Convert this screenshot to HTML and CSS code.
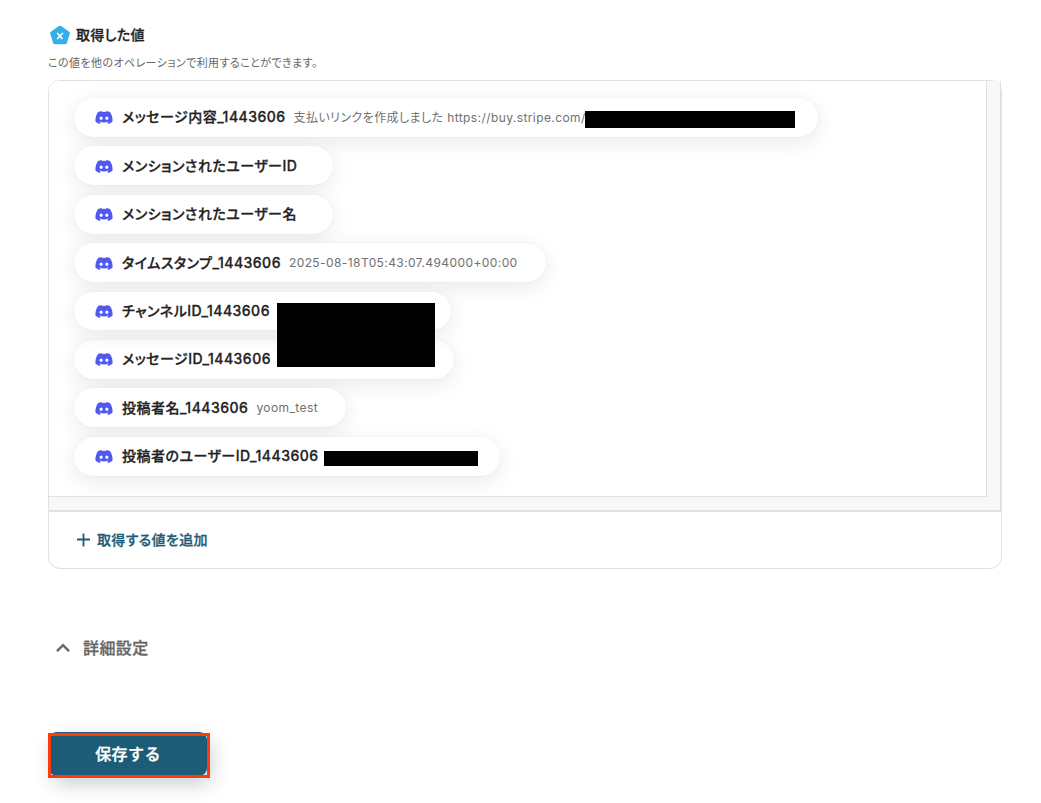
FILE: index.html
```html
<!DOCTYPE html>
<html lang="ja">

<head>
    <meta charset="UTF-8">
    <meta name="viewport" content="width=device-width, initial-scale=1.0">
    <title>取得した値</title>
    <link rel="stylesheet" href="styles.css">
</head>

<body>
    <svg width="0" height="0" class="sprite">
        <symbol id="discord" viewBox="0 0 127.14 96.36">
            <path fill="#5059ef" d="M107.7,8.07A105.15,105.15,0,0,0,81.47,0a72.06,72.06,0,0,0-3.36,6.83A97.68,97.68,0,0,0,49,6.83,72.37,72.37,0,0,0,45.64,0,105.89,105.89,0,0,0,19.39,8.09C2.79,32.65-1.71,56.6.54,80.21h0A105.73,105.73,0,0,0,32.71,96.36,77.7,77.7,0,0,0,39.6,85.25a68.42,68.42,0,0,1-10.85-5.18c.91-.66,1.8-1.34,2.66-2a75.57,75.57,0,0,0,64.32,0c.87.71,1.76,1.39,2.66,2a68.68,68.68,0,0,1-10.87,5.19,77,77,0,0,0,6.89,11.1A105.25,105.25,0,0,0,126.6,80.22h0C129.24,52.84,122.09,29.11,107.7,8.07ZM42.45,65.69C36.18,65.69,31,60,31,53s5-12.74,11.43-12.74S54,46,53.89,53,48.84,65.69,42.45,65.69Zm42.24,0C78.41,65.69,73.25,60,73.25,53s5-12.74,11.44-12.74S96.23,46,96.12,53,91.08,65.69,84.69,65.69Z"/>
        </symbol>
    </svg>

    <main>
        <h2>
            <svg class="badge" width="20" height="20" viewBox="0 0 20 20">
                <path d="M10 2.6 L18 8.4 L15 17.4 H5 L2 8.4 Z" fill="#36aee8" stroke="#36aee8" stroke-width="3.8" stroke-linejoin="round"/>
                <path d="M7.2 8 L12.4 14 M12.8 8 L7.2 14" stroke="#fff" stroke-width="1.6"/>
            </svg>
            <span>取得した値</span>
        </h2>
        <p class="desc">この値を他のオペレーションで利用することができます。</p>

        <section class="card">
            <div class="scroll">
                <ul class="values">
                    <li class="wide"><svg><use href="#discord"/></svg><b>メッセージ内容_1443606</b><span>支払いリンクを作成しました https://buy.stripe.com/</span><i class="mask mask-link"></i></li>
                    <li><svg><use href="#discord"/></svg><b>メンションされたユーザーID</b><span></span></li>
                    <li><svg><use href="#discord"/></svg><b>メンションされたユーザー名</b><span></span></li>
                    <li><svg><use href="#discord"/></svg><b>タイムスタンプ_1443606</b><span>2025-08-18T05:43:07.494000+00:00</span></li>
                    <li class="channel"><svg><use href="#discord"/></svg><b>チャンネルID_1443606</b><i class="mask mask-ids"></i></li>
                    <li class="message"><svg><use href="#discord"/></svg><b>メッセージID_1443606</b></li>
                    <li><svg><use href="#discord"/></svg><b>投稿者名_1443606</b><span>yoom_test</span></li>
                    <li class="user"><svg><use href="#discord"/></svg><b>投稿者のユーザーID_1443606</b><i class="mask mask-user"></i></li>
                </ul>
            </div>
            <a class="add">
                <svg width="14" height="14" viewBox="0 0 14 14"><path d="M6.5 .5 V13.5 M0 6.5 H13" stroke="#1d5c77" stroke-width="1.8"/></svg>
                <span>取得する値を追加</span>
            </a>
        </section>

        <div class="detail">
            <svg width="14" height="10" viewBox="0 0 14 10"><path d="M1 8.2 L7 2.2 L13 8.2" fill="none" stroke="#666" stroke-width="2.4"/></svg>
            <span>詳細設定</span>
        </div>

        <div class="save">
            <button>保存する</button>
        </div>
    </main>
</body>

</html>
```
FILE: styles.css
```css
* {
    margin: 0;
    padding: 0;
    box-sizing: border-box;
}

body {
    height: 803px;
    font-family: Inter, "Noto Sans CJK JP", sans-serif;
    font-feature-settings: "palt";
    color: #222;
    background-color: #fff;
    overflow: hidden;
}

.sprite {
    position: absolute;
}

main {
    width: 954px;
    height: 803px;
    margin-left: 48px;
    padding-top: 25px;
}

/* a bit heavier than medium */
h2,
li b,
.add,
.detail,
.save button {
    font-weight: 500;
    -webkit-text-stroke: 0.3px currentColor;
}

h2 {
    display: flex;
    align-items: center;
    gap: 6px;
    height: 20px;
    padding-left: 2px;
    font-size: 14px;
    letter-spacing: 0.35px;
}

h2 span {
    padding-bottom: 3px;
}

.desc {
    height: 20px;
    margin: 8px 0 7px;
    line-height: 20px;
    font-size: 11px;
    letter-spacing: 0.42px;
    color: #666;
}

.card {
    height: 489px;
    border: 1px solid #e0e0e0;
    border-radius: 12px;
}

.scroll {
    height: 431px;
    padding: 0 13px 14px 0;
    background-color: #f8f8f8;
    border-right: 1px solid #e0e0e0;
    border-bottom: 2px solid #e0e0e0;
    border-top-left-radius: 11px;
}

.values {
    display: flex;
    flex-direction: column;
    align-items: flex-start;
    gap: 9.73px;
    height: 416px;
    padding: 17px 25px;
    list-style: none;
    overflow: hidden;
    background-color: #fff;
    border-right: 1px solid #e0e0e0;
    border-bottom: 1px solid #e0e0e0;
    border-top-left-radius: 11px;
}

li {
    display: flex;
    align-items: center;
    position: relative;
    height: 38.7px;
    flex-shrink: 0;
    padding: 0 28px 0 21px;
    border-radius: 20px;
    background-color: #fff;
    box-shadow: 0 5px 22px rgba(0, 0, 0, 0.09), 0 0 2px rgba(0, 0, 0, 0.06);
    white-space: nowrap;
}

li svg {
    width: 18px;
    height: 13px;
    margin: 1px 9px 0 0;
}

li b {
    padding-bottom: 2px;
    font-size: 14px;
    letter-spacing: 0.48px;
}

li span {
    margin-left: 8px;
    font-size: 12px;
    letter-spacing: 0.41px;
    color: #707070;
}

.wide { width: 744px; }
.channel { width: 377px; z-index: 1; }
.message { width: 380px; }
.user { width: 426px; }

.wide span {
    padding-bottom: 2px;
}

/* blacked out values */
.mask {
    position: absolute;
    background-color: #000;
}

.mask-link {
    left: 511px;
    top: 13px;
    width: 210px;
    height: 17px;
}

.mask-ids {
    left: 203px;
    top: 11px;
    width: 158px;
    height: 64px;
}

.mask-user {
    left: 250px;
    top: 14px;
    width: 154px;
    height: 15px;
}

.add {
    display: flex;
    align-items: center;
    gap: 6px;
    height: 56px;
    padding-left: 28px;
    font-size: 14px;
    letter-spacing: 0.35px;
    color: #1d5c77;
}

.add span,
.detail span {
    padding-bottom: 2px;
}

.detail {
    display: flex;
    align-items: center;
    gap: 13px;
    height: 24px;
    margin-top: 67px;
    padding-left: 8px;
    font-size: 16px;
    letter-spacing: 0.4px;
    color: #666;
}

.save {
    width: 162px;
    height: 45px;
    margin-top: 73px;
    outline: 3px solid #fa3c0c;
    outline-offset: -3px;
}

.save button {
    position: relative;
    z-index: -1;
    top: -1px;
    width: 158px;
    height: 44px;
    margin-left: 1px;
    padding-bottom: 2px;
    border: none;
    border-radius: 8px;
    background-color: #1d5c77;
    box-shadow: 4px 8px 20px rgba(0, 30, 50, 0.22);
    color: #fff;
    font-family: inherit;
    font-size: 16px;
    letter-spacing: 0.4px;
}
```
